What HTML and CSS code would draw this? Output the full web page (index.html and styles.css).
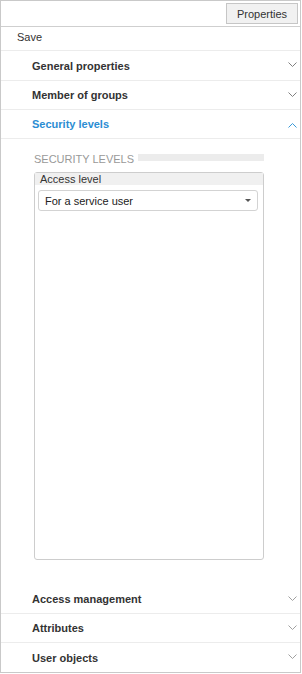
FILE: index.html
```html
<!DOCTYPE html>
<html>
<head>
<meta charset="utf-8">
<link rel="stylesheet" href="styles.css">
</head>
<body>
<div class="frame">
  <div class="toolbar">
    <button class="btn">Properties</button>
  </div>
  <div class="save">Save</div>
  <div class="hdr first"><span>General properties</span><svg class="chev" width="9" height="5" viewBox="0 0 9 5"><path d="M0.5 0.5 L4.5 4.5 L8.5 0.5" fill="none" stroke="#808080" stroke-width="1"/></svg></div>
  <div class="hdr"><span>Member of groups</span><svg class="chev" width="9" height="5" viewBox="0 0 9 5"><path d="M0.5 0.5 L4.5 4.5 L8.5 0.5" fill="none" stroke="#808080" stroke-width="1"/></svg></div>
  <div class="hdr active"><span>Security levels</span><svg class="chev up" width="9" height="5" viewBox="0 0 9 5"><path d="M0.5 4.5 L4.5 0.5 L8.5 4.5" fill="none" stroke="#3a9ad9" stroke-width="1"/></svg></div>
  <div class="content">
    <div class="title-row">
      <span class="title">SECURITY LEVELS</span>
      <span class="title-bar"></span>
    </div>
    <div class="group">
      <div class="group-head">Access level</div>
      <div class="select">
        <span>For a service user</span>
        <span class="caret"></span>
      </div>
    </div>
  </div>
  <div class="hdr"><span>Access management</span><svg class="chev" width="9" height="5" viewBox="0 0 9 5"><path d="M0.5 0.5 L4.5 4.5 L8.5 0.5" fill="none" stroke="#a0a0a0" stroke-width="1"/></svg></div>
  <div class="hdr"><span>Attributes</span><svg class="chev" width="9" height="5" viewBox="0 0 9 5"><path d="M0.5 0.5 L4.5 4.5 L8.5 0.5" fill="none" stroke="#a0a0a0" stroke-width="1"/></svg></div>
  <div class="hdr last"><span>User objects</span><svg class="chev" width="9" height="5" viewBox="0 0 9 5"><path d="M0.5 0.5 L4.5 4.5 L8.5 0.5" fill="none" stroke="#a0a0a0" stroke-width="1"/></svg></div>
</div>
</body>
</html>
```
FILE: styles.css
```css
html, body {
  margin: 0;
  padding: 0;
  background: #fff;
}
.frame {
  width: 301px;
  height: 673px;
  box-sizing: border-box;
  border: 1px solid #c9c9c9;
  display: flex;
  flex-direction: column;
  font-family: "Liberation Sans", Arial, sans-serif;
  font-size: 11px;
  color: #333;
}
.toolbar {
  height: 23px;
  flex: none;
  border-bottom: 1px solid #cfcfcf;
  display: flex;
  justify-content: flex-end;
  align-items: flex-start;
  padding: 2px 2px 0 0;
}
.btn {
  width: 72px;
  height: 21px;
  margin: 0;
  padding: 0;
  border: 1px solid #c6c6c6;
  background: #f1f1f1;
  font-family: "Liberation Sans", Arial, sans-serif;
  font-size: 11px;
  color: #333;
  border-radius: 0;
}
.save {
  flex: none;
  height: 23px;
  line-height: 21px;
  border-bottom: 1px solid #ececec;
  padding-left: 16px;
}
.hdr {
  flex: none;
  height: 28px;
  box-sizing: content-box;
  border-bottom: 1px solid #ececec;
  padding: 0 3px 0 31px;
  display: flex;
  align-items: center;
  justify-content: space-between;
  font-weight: bold;
  line-height: 27px;
}
.hdr span {
  padding-top: 1px;
}
.hdr.first {
  height: 29px;
}
.hdr.last {
  border-bottom: none;
  height: 29px;
}
.hdr.active {
  color: #2b8dd3;
}
.chev {
  display: block;
  margin-top: -2px;
}
.chev.up {
  margin-top: 2px;
}
.content {
  flex: 1;
  display: flex;
  flex-direction: column;
  padding: 13px 36px 25px 33px;
  min-height: 0;
}
.title-row {
  display: flex;
  align-items: flex-start;
  height: 14px;
  margin-bottom: 6px;
}
.title {
  font-size: 11px;
  line-height: 14px;
  color: #999;
}
.title-bar {
  flex: 1;
  height: 7px;
  margin-top: 2px;
  margin-left: 4px;
  background: #ececec;
}
.group {
  flex: 1;
  border: 1px solid #cdcdcd;
  border-radius: 3px;
  display: flex;
  flex-direction: column;
  padding: 0 5px 0 3px;
}
.group-head {
  background: #f0f0f0;
  margin: 0 -5px 0 -3px;
  height: 12px;
  line-height: 12px;
  padding: 0 5px;
}
.select {
  margin-top: 5px;
  height: 19px;
  border: 1px solid #d3d3d3;
  border-radius: 3px;
  display: flex;
  align-items: center;
  justify-content: space-between;
  padding: 0 6px;
  color: #222;
}
.caret {
  width: 0;
  height: 0;
  border-left: 3px solid transparent;
  border-right: 3px solid transparent;
  border-top: 3px solid #555;
}
```
